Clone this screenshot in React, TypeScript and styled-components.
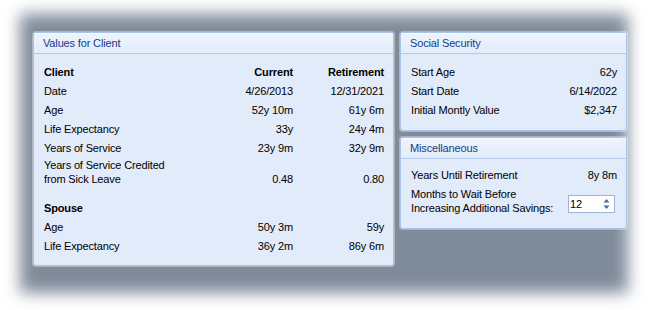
import React from "react";
import styled, { createGlobalStyle } from "styled-components";

const Global = createGlobalStyle`
  html, body { margin: 0; padding: 0; background: #ffffff; }
  body {
    min-height: 310px;
    overflow: hidden;
    font-family: "Liberation Sans", Arial, sans-serif;
    font-size: 11px;
    letter-spacing: -0.15px;
    color: #000;
  }
  #root { min-height: 310px; padding-top: 14px; box-sizing: border-box; }
`;

const Backdrop = styled.div`
  position: relative;
  box-sizing: border-box;
  width: 608px;
  height: 279px;
  margin: 0 0 0 20px;
  padding: 18px 0 0 13px;
  &::before {
    content: "";
    position: absolute;
    inset: 0;
    background: #7f8a9a;
    filter: blur(8px);
  }
`;

const Columns = styled.div`
  position: relative;
  z-index: 1;
  display: flex;
  align-items: flex-start;
  gap: 6px;
`;

const Stack = styled.div`
  display: flex;
  flex-direction: column;
  gap: 6px;
`;

const Panel = styled.section<{ $w: number; $h: number }>`
  box-sizing: border-box;
  width: ${(p) => p.$w}px;
  height: ${(p) => p.$h}px;
  border: 1px solid #a9c4ea;
  border-radius: 3px;
  background: #e2ebfa;
  box-shadow: 0 0 0 1px rgba(255, 255, 255, 0.35);
  display: flex;
  flex-direction: column;
  overflow: hidden;
`;

const Header = styled.header`
  height: 20px;
  line-height: 20px;
  padding-left: 9px;
  border-bottom: 1px solid #b4cbec;
  background: linear-gradient(#eef4fd, #e3ecfb);
  color: #123a8a;
  box-shadow: inset 0 1px 0 #f7faff;
`;

const Body = styled.div<{ $top: number }>`
  padding: ${(p) => p.$top}px 9px 0 10px;
  display: flex;
  flex-direction: column;
`;

const Row = styled.div<{ $cols: string; $gap?: number }>`
  display: grid;
  grid-template-columns: ${(p) => p.$cols};
  align-items: end;
  min-height: 19px;
  line-height: 14px;
  padding-bottom: 2.5px;
  box-sizing: border-box;
  margin-top: ${(p) => p.$gap ?? 0}px;
`;

const Label = styled.span<{ $bold?: boolean }>`
  font-weight: ${(p) => (p.$bold ? 700 : 400)};
`;

const Value = styled.span<{ $bold?: boolean }>`
  text-align: right;
  font-weight: ${(p) => (p.$bold ? 700 : 400)};
`;

const Spinner = styled.div`
  box-sizing: border-box;
  width: 47px;
  height: 18px;
  margin: 0 2px 2px 0;
  border: 1px solid #9fb5d6;
  background: #fff;
  display: flex;
  align-items: center;
  justify-content: space-between;
  padding: 0 4px 0 1px;
  line-height: 14px;
`;

const Arrows = () => (
  <svg width="7" height="12" viewBox="0 0 7 12">
    <path d="M3.5 1 L6.5 4.5 H0.5 Z" fill="#4a6aa0" />
    <path d="M3.5 11 L6.5 7.5 H0.5 Z" fill="#4a6aa0" />
  </svg>
);

const CLIENT_COLS = "1fr 80px 91px";

type R = { label: React.ReactNode; cur: string; ret: string; bold?: boolean; gap?: number };

const clientRows: R[] = [
  { label: "Client", cur: "Current", ret: "Retirement", bold: true },
  { label: "Date", cur: "4/26/2013", ret: "12/31/2021" },
  { label: "Age", cur: "52y 10m", ret: "61y 6m" },
  { label: "Life Expectancy", cur: "33y", ret: "24y 4m" },
  { label: "Years of Service", cur: "23y 9m", ret: "32y 9m" },
  {
    label: (
      <>
        Years of Service Credited
        <br />
        from Sick Leave
      </>
    ),
    cur: "0.48",
    ret: "0.80",
    gap: 1,
  },
  { label: "Spouse", cur: "", ret: "", bold: true, gap: 10 },
  { label: "Age", cur: "50y 3m", ret: "59y" },
  { label: "Life Expectancy", cur: "36y 2m", ret: "86y 6m" },
];

const ssRows = [
  ["Start Age", "62y"],
  ["Start Date", "6/14/2022"],
  ["Initial Montly Value", "$2,347"],
];

export default function App() {
  return (
    <>
      <Global />
      <Backdrop>
        <Columns>
          <Panel $w={361} $h={234}>
            <Header>Values for Client</Header>
            <Body $top={8}>
              {clientRows.map((r, i) => (
                <Row key={i} $cols={CLIENT_COLS} $gap={r.gap}>
                  <Label $bold={r.bold}>{r.label}</Label>
                  <Value $bold={r.bold}>{r.cur}</Value>
                  <Value $bold={r.bold}>{r.ret}</Value>
                </Row>
              ))}
            </Body>
          </Panel>
          <Stack>
            <Panel $w={227} $h={99}>
              <Header>Social Security</Header>
              <Body $top={8}>
                {ssRows.map(([l, v]) => (
                  <Row key={l} $cols="1fr auto">
                    <Label>{l}</Label>
                    <Value>{v}</Value>
                  </Row>
                ))}
              </Body>
            </Panel>
            <Panel $w={227} $h={92}>
              <Header>Miscellaneous</Header>
              <Body $top={6}>
                <Row $cols="1fr auto">
                  <Label>Years Until Retirement</Label>
                  <Value>8y 8m</Value>
                </Row>
                <Row $cols="1fr auto" $gap={3}>
                  <Label>
                    Months to Wait Before
                    <br />
                    Increasing Additional Savings:
                  </Label>
                  <Spinner>
                    <span>12</span>
                    <Arrows />
                  </Spinner>
                </Row>
              </Body>
            </Panel>
          </Stack>
        </Columns>
      </Backdrop>
    </>
  );
}
